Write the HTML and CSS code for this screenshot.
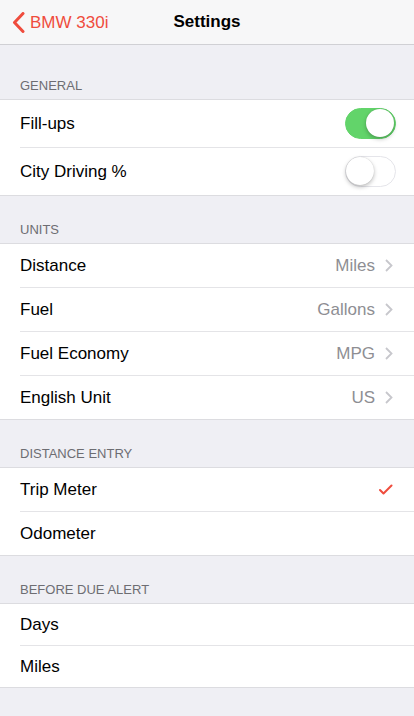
FILE: index.html
```html
<!DOCTYPE html>
<html lang="en">
  <head>
    <meta charset="UTF-8" />
    <meta name="viewport" content="width=device-width, initial-scale=1.0" />
    <title>Settings</title>
    <link rel="stylesheet" href="styles.css">
  </head>
  <body>
    <div class="navbar">
      <a class="back" href="#">
        <svg width="13" height="21" viewBox="0 0 13 21">
          <path d="M11 1.5L2.5 10.5L11 19.5" fill="none" stroke="#ef4c3d" stroke-width="3" stroke-linecap="round" stroke-linejoin="round" />
        </svg>
        <span>BMW 330i</span>
      </a>
      <div class="title">Settings</div>
    </div>

    <div class="section-header first">GENERAL</div>
    <div class="group tall">
      <div class="row">
        <span class="label">Fill-ups</span>
        <span class="switch on"><span class="knob"></span></span>
      </div>
      <div class="row">
        <span class="label">City Driving %</span>
        <span class="switch"><span class="knob"></span></span>
      </div>
    </div>

    <div class="section-header">UNITS</div>
    <div class="group">
      <div class="row">
        <span class="label">Distance</span>
        <span class="detail">Miles</span>
        <svg class="chevron" width="8" height="13" viewBox="0 0 8 13"><path d="M1 1l5.5 5.5L1 12" /></svg>
      </div>
      <div class="row">
        <span class="label">Fuel</span>
        <span class="detail">Gallons</span>
        <svg class="chevron" width="8" height="13" viewBox="0 0 8 13"><path d="M1 1l5.5 5.5L1 12" /></svg>
      </div>
      <div class="row">
        <span class="label">Fuel Economy</span>
        <span class="detail">MPG</span>
        <svg class="chevron" width="8" height="13" viewBox="0 0 8 13"><path d="M1 1l5.5 5.5L1 12" /></svg>
      </div>
      <div class="row">
        <span class="label">English Unit</span>
        <span class="detail">US</span>
        <svg class="chevron" width="8" height="13" viewBox="0 0 8 13"><path d="M1 1l5.5 5.5L1 12" /></svg>
      </div>
    </div>

    <div class="section-header">DISTANCE ENTRY</div>
    <div class="group">
      <div class="row">
        <span class="label">Trip Meter</span>
        <svg class="check" width="14" height="11" viewBox="0 0 14 11"><path d="M1 6l3.5 3.5L12.5 1.5" /></svg>
      </div>
      <div class="row">
        <span class="label">Odometer</span>
      </div>
    </div>

    <div class="section-header">BEFORE DUE ALERT</div>
    <div class="group short">
      <div class="row">
        <span class="label">Days</span>
      </div>
      <div class="row">
        <span class="label">Miles</span>
      </div>
    </div>
  </body>
</html>
```

FILE: styles.css
```css
body {
  margin: 0;
  background-color: #efeff4;
  font-family: "Liberation Sans", Arial, sans-serif;
  color: #000;
}
.navbar {
  position: relative;
  height: 44px;
  display: flex;
  align-items: center;
  justify-content: center;
  background-color: #f7f7f8;
  border-bottom: 1px solid #d0d0d4;
}
.back {
  position: absolute;
  left: 12px;
  top: 12px;
  display: flex;
  align-items: center;
  gap: 5px;
  color: #ef4c3d;
  text-decoration: none;
  font-size: 17px;
}
.title {
  font-size: 17px;
  font-weight: bold;
}
.section-header {
  height: 47px;
  box-sizing: border-box;
  display: flex;
  align-items: flex-end;
  padding: 0 20px 6px;
  font-size: 13px;
  color: #6d6d72;
}
.section-header.first {
  height: 54px;
}
.group {
  background-color: #fff;
  border-top: 1px solid #dcdce0;
  border-bottom: 1px solid #dcdce0;
}
.row {
  height: 43px;
  margin-left: 20px;
  padding-right: 21px;
  display: flex;
  align-items: center;
  border-bottom: 1px solid #e4e4e7;
  font-size: 17px;
}
.row:last-child {
  border-bottom: none;
}
.group.tall .row {
  height: 47px;
  padding-right: 18px;
}
.group.short .row {
  height: 41px;
}
.label {
  flex: 1;
}
.detail {
  color: #8e8e93;
  margin-right: 10px;
}
.chevron path {
  fill: none;
  stroke: #c7c7cc;
  stroke-width: 1.8;
}
.check path {
  fill: none;
  stroke: #ef4c3d;
  stroke-width: 2;
  stroke-linecap: round;
  stroke-linejoin: round;
}
.switch {
  position: relative;
  width: 51px;
  height: 31px;
  box-sizing: border-box;
  border-radius: 16px;
  border: 1.5px solid #e5e5ea;
  background-color: #fff;
}
.switch.on {
  background-color: #62d46a;
  border-color: #62d46a;
}
.knob {
  position: absolute;
  top: 0;
  left: 0;
  width: 28px;
  height: 28px;
  border-radius: 50%;
  background-color: #fff;
  box-shadow: 0 2px 4px rgba(0, 0, 0, 0.25), 0 0 1px rgba(0, 0, 0, 0.2);
}
.switch.on .knob {
  left: 20px;
}
```
